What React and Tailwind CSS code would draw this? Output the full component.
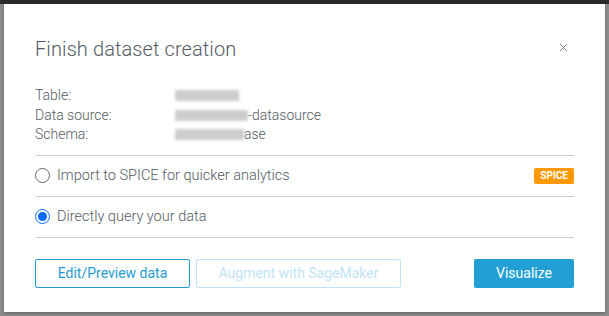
import { X } from 'lucide-react'

function Row({ label, children }) {
  return (
    <div className="flex h-[19.5px] items-center">
      <span className="w-[140px]">{label}</span>
      <span className="flex items-center">{children}</span>
    </div>
  )
}

function Blur({ w }) {
  return <span className={`inline-block h-[11px] ${w} bg-[#cdcdcd] blur-[1.5px]`} />
}

export default function App() {
  return (
    <div className="w-[609px] h-[316px] bg-[#8c8c8c] overflow-hidden font-['Roboto',sans-serif] text-[#545b64]">
      <div className="h-[4px] bg-[#2b2b2b]" />
      <div className="mx-[4px] h-[308px] bg-white shadow-[0_1px_3px_rgba(0,0,0,0.3)] px-[31px] pt-[31px]">
        {/* header */}
        <div className="flex items-center justify-between h-[28px]">
          <h1 className="text-[20px] font-light text-[#545b64] tracking-[0.1px]">Finish dataset creation</h1>
          <X className="w-[13px] h-[13px] text-[#666] mr-[4px] -mt-[4px]" strokeWidth={1.5} />
        </div>

        {/* details */}
        <div className="mt-[23px] text-[14px] leading-[19px] font-light">
          <Row label="Table:"><Blur w="w-[64px]" /></Row>
          <Row label="Data source:">
            <Blur w="w-[73px]" />
            <span>-datasource</span>
          </Row>
          <Row label="Schema:">
            <Blur w="w-[69px]" />
            <span>ase</span>
          </Row>
        </div>

        <div className="mt-[10px] border-t border-[#cfcfcf]" />

        {/* options */}
        <div className="text-[14.5px] font-light">
          <div className="flex items-center h-[40px]">
            <span className="w-[15px] h-[15px] rounded-full border border-[#666] bg-white" />
            <span className="ml-[7px] flex-1">Import to SPICE for quicker analytics</span>
            <span className="bg-[#f90] text-white text-[10px] font-bold px-[6px] h-[16px] leading-[16px] rounded-[2px]">SPICE</span>
          </div>
          <div className="border-t border-[#cfcfcf]" />
          <div className="flex items-center h-[40px]">
            <span className="w-[15px] h-[15px] rounded-full border-[1.5px] border-[#0a6cff] flex items-center justify-center">
              <span className="w-[9px] h-[9px] rounded-full bg-[#0a6cff]" />
            </span>
            <span className="ml-[7px]">Directly query your data</span>
          </div>
          <div className="border-t border-[#cfcfcf]" />
        </div>

        {/* actions */}
        <div className="mt-[21px] flex items-center text-[14px]">
          <button className="w-[155px] h-[29px] border border-[#1f9bd1] rounded-[2px] text-[#1f9bd1] bg-white">
            Edit/Preview data
          </button>
          <button className="ml-[6px] w-[205px] h-[29px] border border-[#bfe4f3] rounded-[2px] text-[#bfe4f3] bg-white">
            Augment with SageMaker
          </button>
          <button className="ml-auto w-[100px] h-[29px] rounded-[2px] bg-[#22a0d6] text-white">
            Visualize
          </button>
        </div>
      </div>
    </div>
  )
}
